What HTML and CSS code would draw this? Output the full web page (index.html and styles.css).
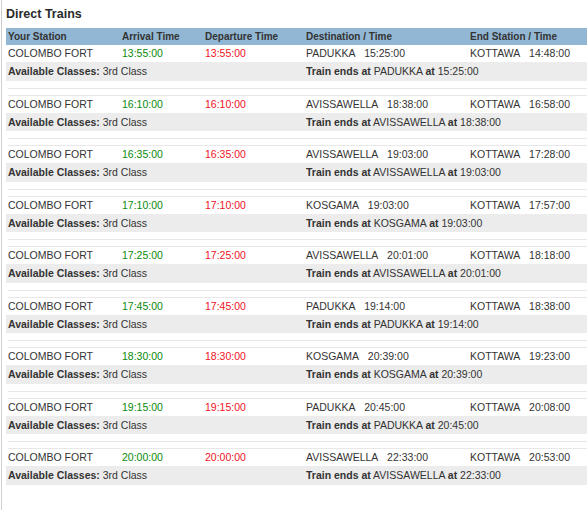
FILE: index.html
```html
<!DOCTYPE html>
<html>
<head>
<meta charset="utf-8">
<link rel="stylesheet" href="styles.css">
</head>
<body>
<div class="page">
  <h2 class="title">Direct Trains</h2>
  <div class="table">
    <div class="row head">
      <div>Your Station</div><div>Arrival Time</div><div>Departure Time</div><div>Destination / Time</div><div>End Station / Time</div>
    </div>

    <div class="row data"><div>COLOMBO FORT</div><div class="arr">13:55:00</div><div class="dep">13:55:00</div><div>PADUKKA&nbsp;&nbsp;&nbsp;15:25:00</div><div>KOTTAWA&nbsp;&nbsp;&nbsp;14:48:00</div></div>
    <div class="row info"><div class="span2"><b>Available Classes:</b> 3rd Class</div><div class="span3"><b>Train ends at</b> PADUKKA <b>at</b> 15:25:00</div></div>
    <div class="sep"></div>

    <div class="row data"><div>COLOMBO FORT</div><div class="arr">16:10:00</div><div class="dep">16:10:00</div><div>AVISSAWELLA&nbsp;&nbsp;&nbsp;18:38:00</div><div>KOTTAWA&nbsp;&nbsp;&nbsp;16:58:00</div></div>
    <div class="row info"><div class="span2"><b>Available Classes:</b> 3rd Class</div><div class="span3"><b>Train ends at</b> AVISSAWELLA <b>at</b> 18:38:00</div></div>
    <div class="sep"></div>

    <div class="row data"><div>COLOMBO FORT</div><div class="arr">16:35:00</div><div class="dep">16:35:00</div><div>AVISSAWELLA&nbsp;&nbsp;&nbsp;19:03:00</div><div>KOTTAWA&nbsp;&nbsp;&nbsp;17:28:00</div></div>
    <div class="row info"><div class="span2"><b>Available Classes:</b> 3rd Class</div><div class="span3"><b>Train ends at</b> AVISSAWELLA <b>at</b> 19:03:00</div></div>
    <div class="sep"></div>

    <div class="row data"><div>COLOMBO FORT</div><div class="arr">17:10:00</div><div class="dep">17:10:00</div><div>KOSGAMA&nbsp;&nbsp;&nbsp;19:03:00</div><div>KOTTAWA&nbsp;&nbsp;&nbsp;17:57:00</div></div>
    <div class="row info"><div class="span2"><b>Available Classes:</b> 3rd Class</div><div class="span3"><b>Train ends at</b> KOSGAMA <b>at</b> 19:03:00</div></div>
    <div class="sep"></div>

    <div class="row data"><div>COLOMBO FORT</div><div class="arr">17:25:00</div><div class="dep">17:25:00</div><div>AVISSAWELLA&nbsp;&nbsp;&nbsp;20:01:00</div><div>KOTTAWA&nbsp;&nbsp;&nbsp;18:18:00</div></div>
    <div class="row info"><div class="span2"><b>Available Classes:</b> 3rd Class</div><div class="span3"><b>Train ends at</b> AVISSAWELLA <b>at</b> 20:01:00</div></div>
    <div class="sep"></div>

    <div class="row data"><div>COLOMBO FORT</div><div class="arr">17:45:00</div><div class="dep">17:45:00</div><div>PADUKKA&nbsp;&nbsp;&nbsp;19:14:00</div><div>KOTTAWA&nbsp;&nbsp;&nbsp;18:38:00</div></div>
    <div class="row info"><div class="span2"><b>Available Classes:</b> 3rd Class</div><div class="span3"><b>Train ends at</b> PADUKKA <b>at</b> 19:14:00</div></div>
    <div class="sep"></div>

    <div class="row data"><div>COLOMBO FORT</div><div class="arr">18:30:00</div><div class="dep">18:30:00</div><div>KOSGAMA&nbsp;&nbsp;&nbsp;20:39:00</div><div>KOTTAWA&nbsp;&nbsp;&nbsp;19:23:00</div></div>
    <div class="row info"><div class="span2"><b>Available Classes:</b> 3rd Class</div><div class="span3"><b>Train ends at</b> KOSGAMA <b>at</b> 20:39:00</div></div>
    <div class="sep"></div>

    <div class="row data"><div>COLOMBO FORT</div><div class="arr">19:15:00</div><div class="dep">19:15:00</div><div>PADUKKA&nbsp;&nbsp;&nbsp;20:45:00</div><div>KOTTAWA&nbsp;&nbsp;&nbsp;20:08:00</div></div>
    <div class="row info"><div class="span2"><b>Available Classes:</b> 3rd Class</div><div class="span3"><b>Train ends at</b> PADUKKA <b>at</b> 20:45:00</div></div>
    <div class="sep"></div>

    <div class="row data"><div>COLOMBO FORT</div><div class="arr">20:00:00</div><div class="dep">20:00:00</div><div>AVISSAWELLA&nbsp;&nbsp;&nbsp;22:33:00</div><div>KOTTAWA&nbsp;&nbsp;&nbsp;20:53:00</div></div>
    <div class="row info"><div class="span2"><b>Available Classes:</b> 3rd Class</div><div class="span3"><b>Train ends at</b> AVISSAWELLA <b>at</b> 22:33:00</div></div>
  </div>
</div>
</body>
</html>
```

FILE: styles.css
```css
html, body {
  margin: 0;
  padding: 0;
  background: #fff;
  overflow: hidden;
}
body {
  font-family: "Liberation Sans", Arial, sans-serif;
  font-size: 10.5px;
  color: #333;
}
.page {
  margin-left: 1px;
  border-left: 1px solid #cfcfcf;
  padding-left: 4px;
  min-height: 510px;
  box-sizing: border-box;
}
.title {
  margin: 0;
  padding: 6px 0 6px 0;
  font-size: 12.5px;
  line-height: 16px;
  font-weight: bold;
  color: #2b2b2b;
}
.table {
  width: 600px;
}
.row {
  display: grid;
  grid-template-columns: 114px 83px 101px 164px 138px;
}
.row > div {
  padding: 0 2px;
  white-space: nowrap;
}
.head {
  background: #92b7d4;
  font-weight: bold;
  font-size: 10px;
  line-height: 17px;
  height: 17px;
}
.data {
  line-height: 17px;
  height: 17px;
}
.info {
  background: #ececec;
  line-height: 18.5px;
  height: 18.5px;
}
.info b { font-weight: bold; }
.span2 { grid-column: 1 / span 3; }
.span3 { grid-column: 4 / span 2; }
.arr { color: #0a8a0a; }
.dep { color: #f0121e; }
.sep {
  margin-left: 2px;
  height: 15px;
  box-sizing: border-box;
  padding-top: 7px;
}
.sep::before {
  content: "";
  display: block;
  height: 6px;
  border-top: 1px solid #e8e8e8;
  border-bottom: 1px solid #e8e8e8;
}
```
